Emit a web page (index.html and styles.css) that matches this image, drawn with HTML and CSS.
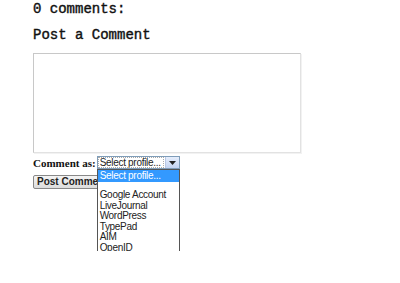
FILE: index.html
```html
<!DOCTYPE html>
<html lang="en">
<head>
    <meta charset="UTF-8">
    <title>Post a Comment</title>
    <link rel="stylesheet" href="styles.css">
</head>
<body>
    <div id="comments">
        <h4 class="count">0 comments:</h4>
        <h4 class="post-title">Post a Comment</h4>
        <div class="comment-box"></div>

        <div class="comment-as">
            <span class="label">Comment as:</span>
            <div class="select">
                <span class="current">Select profile...</span>
                <span class="arrow">
                    <svg width="7" height="4" viewBox="0 0 7 4"><path d="M0 0h7L3.5 4z" fill="#222"/></svg>
                </span>
                <ul class="menu">
                    <li class="active">Select profile...</li>
                    <li class="blank"></li>
                    <li>Google Account</li>
                    <li>LiveJournal</li>
                    <li>WordPress</li>
                    <li>TypePad</li>
                    <li>AIM</li>
                    <li>OpenID</li>
                </ul>
            </div>
        </div>

        <button class="post-btn">Post Comment</button>
    </div>
</body>
</html>
```

FILE: styles.css
```css
html, body {
    height: 100%;
}

body {
    margin: 0;
    min-height: 283px;
    background: #fff;
    font-family: "Liberation Serif", serif;
}

#comments {
    padding: 2px 0 0 33px;
}

h4 {
    margin: 0;
    font-family: "Liberation Mono", monospace;
    font-size: 14px;
    font-weight: normal;
    -webkit-text-stroke: 0.4px #111;
    line-height: 14px;
    color: #111;
}

.post-title {
    margin-top: 12px;
}

.comment-box {
    margin-top: 11px;
    width: 266px;
    height: 98px;
    border: 1px solid #c8c8c8;
    border-right-color: #e2e2e2;
    border-bottom-color: #e2e2e2;
    box-shadow: 1px 1px 0 #f2f2f2;
}

.comment-as {
    display: flex;
    align-items: center;
    margin-top: 3px;
    height: 13px;
    white-space: nowrap;
}

.label {
    flex-shrink: 0;
    margin-right: 1px;
    font-family: "Liberation Serif", serif;
    font-weight: bold;
    font-size: 11px;
    color: #111;
}

.select {
    position: relative;
    z-index: 5;
    flex-shrink: 0;
    display: flex;
    width: 81px;
    height: 11px;
    border: 1px solid #7f9db9;
    font-family: "Liberation Sans", Arial, sans-serif;
    font-size: 10px;
    line-height: 11px;
    letter-spacing: -0.3px;
    color: #222;
}

.current {
    flex: 1;
    min-width: 0;
    padding-left: 2px;
    margin-right: 1px;
    overflow: hidden;
    outline: 1px dotted #aaa;
    outline-offset: -1px;
}

.arrow {
    width: 13px;
    display: flex;
    align-items: center;
    justify-content: center;
    background: linear-gradient(#e6eefc, #c4d4f2);
    border-left: 1px solid #b8c8e6;
}

.menu {
    position: absolute;
    top: 12px;
    left: -1px;
    width: 81px;
    height: 81px;
    margin: 0;
    padding: 0;
    list-style: none;
    background: #fff;
    border: 1px solid #555;
    border-bottom: none;
    overflow: hidden;
}

.menu li {
    height: 10.5px;
    padding-left: 2px;
    font-size: 10px;
    line-height: 10.5px;
    color: #222;
}

.menu li.active {
    height: 12px;
    line-height: 12px;
    background: #3399ff;
    color: #fff;
}

.menu li.blank {
    height: 8px;
}

.post-btn {
    display: block;
    margin-top: 6px;
    width: 76px;
    height: 14px;
    padding: 0 0 0 3px;
    text-align: left;
    white-space: nowrap;
    overflow: hidden;
    font-family: "Liberation Sans", Arial, sans-serif;
    font-size: 10px;
    font-weight: bold;
    line-height: 12px;
    color: #222;
    background: linear-gradient(#f4f4f4, #dcdcdc);
    border: 1px solid #888;
    border-radius: 2px;
}
```
